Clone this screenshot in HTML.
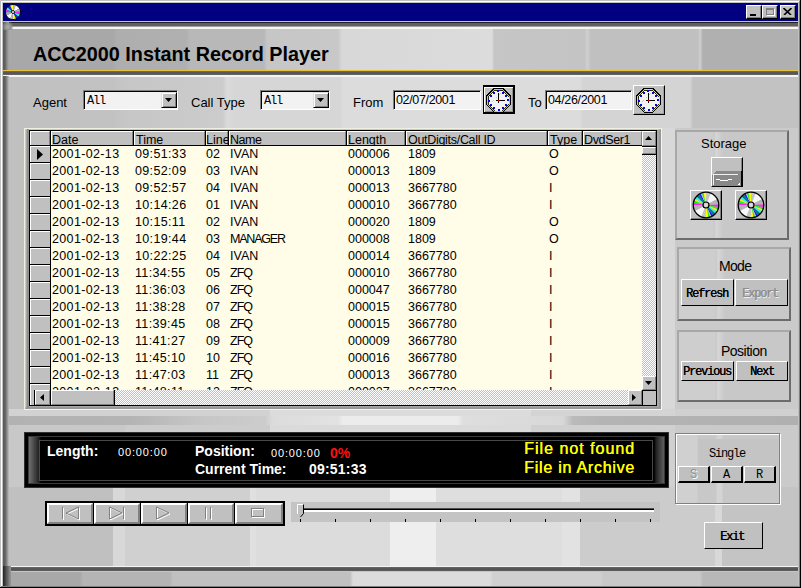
<!DOCTYPE html><html><head><meta charset="utf-8"><style>
*{box-sizing:border-box;margin:0;padding:0}
html,body{width:801px;height:588px;overflow:hidden;background:#c8c8c8}
body{position:relative;font-family:"Liberation Sans",sans-serif;color:#000}
.a{position:absolute}
.t{position:absolute;white-space:nowrap;line-height:1}
.mono{font-family:"Liberation Mono",monospace}
.btn{position:absolute;background:#c0c0c0;border-top:1px solid #fff;border-left:1px solid #fff;border-right:1px solid #000;border-bottom:1px solid #000;box-shadow:inset -1px -1px 0 #808080}
.btn2{position:absolute;background:#c0c0c0;border-top:1px solid #fff;border-left:1px solid #fff;border-right:1px solid #000;border-bottom:1px solid #000}
.sunk{position:absolute;background:#f2f2f2;border-top:1px solid #808080;border-left:1px solid #808080;border-right:1px solid #fff;border-bottom:1px solid #fff;box-shadow:inset 1px 1px 0 #000}
.dither{background-color:#c0c0c0;background-image:linear-gradient(45deg,#fff 25%,transparent 25%,transparent 75%,#fff 75%),linear-gradient(45deg,#fff 25%,transparent 25%,transparent 75%,#fff 75%);background-size:2px 2px;background-position:0 0,1px 1px}
.hdr{position:absolute;top:131px;height:14px;background:#c0c0c0;border-top:1px solid #fff;border-left:1px solid #fff;border-right:1px solid #808080}
.hdrt{position:absolute;top:133px;font-size:12.5px;white-space:nowrap;line-height:13px}
.cell{position:absolute;font-size:12.5px;white-space:nowrap;line-height:13px}
.num{letter-spacing:0}
.ind{position:absolute;left:30px;width:20px;height:16px;background:#c0c0c0;border-top:1px solid #fff;border-left:1px solid #fff}
.panel{position:absolute;border-top:2px solid #a8a8a8;border-left:2px solid #a8a8a8;border-right:2px solid #6c6c6c;border-bottom:2px solid #6c6c6c;background:linear-gradient(90deg,#cecece 0,#cecece 36px,#c8c8c8 37px,#d6d6d6 39px,#cccccc 44px,#c8c8c8 46px,#c8c8c8 200px)}
.wt{color:#fff;font-weight:bold}
</style></head><body>
<div class="a" style="left:0;top:0;width:801px;height:588px;background:#c0c0c0"></div>
<div class="a" style="left:1px;top:1px;width:799px;height:1px;background:#fff"></div>
<div class="a" style="left:1px;top:1px;width:1px;height:585px;background:#fff"></div>
<div class="a" style="left:800px;top:0;width:1px;height:588px;background:#000"></div>
<div class="a" style="left:0;top:587px;width:801px;height:1px;background:#000"></div>
<div class="a" style="left:799px;top:1px;width:1px;height:586px;background:#808080"></div>
<div class="a" style="left:1px;top:586px;width:799px;height:1px;background:#808080"></div>
<div class="a" style="left:3px;top:3px;width:795px;height:18px;background:#000080"></div>
<svg class="a" style="left:4px;top:3px" width="18" height="18" viewBox="0 0 18 18"><path d="M9 9 L1.40 9.27 A7.6 7.6 0 0 1 1.86 6.40 Z" fill="#ff20ff"/><path d="M9 9 L1.86 6.40 A7.6 7.6 0 0 1 3.35 3.91 Z" fill="#30f0f0"/><path d="M9 9 L3.35 3.91 A7.6 7.6 0 0 1 5.91 2.06 Z" fill="#2020ff"/><path d="M9 9 L5.91 2.06 A7.6 7.6 0 0 1 9.27 1.40 Z" fill="#ffff00"/><path d="M9 9 L9.27 1.40 A7.6 7.6 0 0 1 11.85 1.95 Z" fill="#c4c4c4"/><path d="M9 9 L11.85 1.95 A7.6 7.6 0 0 1 15.71 5.43 Z" fill="#f8f8f8"/><path d="M9 9 L15.71 5.43 A7.6 7.6 0 0 1 16.60 8.73 Z" fill="#b4b4b4"/><path d="M9 9 L16.60 8.73 A7.6 7.6 0 0 1 16.14 11.60 Z" fill="#ff20ff"/><path d="M9 9 L16.14 11.60 A7.6 7.6 0 0 1 14.65 14.09 Z" fill="#30f0f0"/><path d="M9 9 L14.65 14.09 A7.6 7.6 0 0 1 12.09 15.94 Z" fill="#2020ff"/><path d="M9 9 L12.09 15.94 A7.6 7.6 0 0 1 8.73 16.60 Z" fill="#ffff00"/><path d="M9 9 L8.73 16.60 A7.6 7.6 0 0 1 6.15 16.05 Z" fill="#c4c4c4"/><path d="M9 9 L6.15 16.05 A7.6 7.6 0 0 1 2.29 12.57 Z" fill="#f8f8f8"/><path d="M9 9 L2.29 12.57 A7.6 7.6 0 0 1 1.40 9.27 Z" fill="#b4b4b4"/><circle cx="9" cy="9" r="7.6" fill="none" stroke="#000" stroke-width="0.9"/><circle cx="9" cy="9" r="1.5" fill="#fff" stroke="#000" stroke-width="0.9"/></svg>
<div class="a" style="left:746px;top:5px;width:16px;height:14px;background:#c0c0c0;border-top:1px solid #fff;border-left:1px solid #fff;border-right:1px solid #000;border-bottom:1px solid #000;box-shadow:inset -1px -1px 0 #808080"></div>
<div class="a" style="left:762px;top:5px;width:16px;height:14px;background:#c0c0c0;border-top:1px solid #fff;border-left:1px solid #fff;border-right:1px solid #000;border-bottom:1px solid #000;box-shadow:inset -1px -1px 0 #808080"></div>
<div class="a" style="left:780px;top:5px;width:16px;height:14px;background:#c0c0c0;border-top:1px solid #fff;border-left:1px solid #fff;border-right:1px solid #000;border-bottom:1px solid #000;box-shadow:inset -1px -1px 0 #808080"></div>
<div class="a" style="left:750px;top:14px;width:6px;height:2px;background:#000"></div>
<div class="a" style="left:766px;top:8px;width:8px;height:7px;border:1px solid #808080;border-top-width:2px;box-shadow:1px 1px 0 #fff"></div>
<svg class="a" style="left:783px;top:8px" width="9" height="7" viewBox="0 0 9 7"><path d="M0.5 0 L8 7 M8.5 0 L1 7" stroke="#000" stroke-width="1.6"/></svg>
<div class="a" style="left:3px;top:21px;width:795px;height:565px;background:#c8c8c8"></div>
<div class="a" style="left:3px;top:21px;width:795px;height:1px;background:#c8c8c8"></div>
<div class="a" style="left:3px;top:22px;width:795px;height:1px;background:#202020"></div>
<div class="a" style="left:3px;top:23px;width:795px;height:3px;background:#606060"></div>
<div class="a" style="left:3px;top:26px;width:795px;height:1px;background:#a0a0a0"></div>
<div class="a" style="left:3px;top:27px;width:795px;height:2px;background:#f6f6f6"></div>
<div class="a" style="left:3px;top:29px;width:795px;height:41px;background:linear-gradient(90deg,#a8a8a8 0,#a8a8a8 110px,#aeaeae 114px,#b0b0b0 183px,#b8b8b8 187px,#b8b8b8 261px,#c6c6c6 264px,#c8c8c8 335px,#d8d8d8 339px,#dcdcdc 489px,#c6c6c6 491px,#c4c4c4 582px,#d0d0d0 584px,#c0c0c0 588px,#c0c0c0 695px,#d0d0d0 697px,#b0b0b0 700px,#b0b0b0 795px)"></div>
<div class="a" style="left:3px;top:22px;width:6px;height:54px;background:linear-gradient(90deg,#5a5a5a 0,#606060 2px,#8c8c8c 4px,#a8a8a8 6px)"></div>
<div class="a" style="left:3px;top:22px;width:10px;height:8px;background:radial-gradient(circle at 5px 5px,#b0b0b0 0,#909090 3px,rgba(144,144,144,0) 6px)"></div>
<div class="a" style="left:3px;top:70px;width:795px;height:1px;background:#e8c040"></div>
<div class="a" style="left:3px;top:71px;width:795px;height:4px;background:linear-gradient(#707070,#505050 50%,#6a6a6a)"></div>
<div class="a" style="left:3px;top:75px;width:795px;height:2px;background:#f4f4f4"></div>
<div class="t" style="left:33px;top:45px;font-size:19.8px;font-weight:bold;color:#000">ACC2000 Instant Record Player</div>
<div class="a" style="left:3px;top:77px;width:795px;height:51px;background:linear-gradient(90deg,#c0c0c0 0px,#c2c2c2 110px,#c6c6c6 122px,#cccccc 220px,#dadada 224px,#d6d6d6 232px,#d6d6d6 337px,#dcdcdc 340px,#dcdcdc 577px,#d4d4d4 580px,#d4d4d4 687px,#c2c2c2 690px,#c2c2c2 795px)"></div>
<div class="a" style="left:3px;top:128px;width:795px;height:282px;background:linear-gradient(90deg,#c0c0c0 0px,#c0c0c0 21px,#c8c8c8 21px,#c8c8c8 658px,#d8d8d8 658px,#d8d8d8 672px,#cacaca 672px,#cacaca 798px)"></div>
<div class="a" style="left:3px;top:409px;width:795px;height:7px;background:linear-gradient(90deg,#d2d2d2 0px,#d2d2d2 267px,#dcdcdc 267px,#dcdcdc 528px,#d4d4d4 528px,#d4d4d4 672px,#d0d0d0 672px,#d0d0d0 798px)"></div>
<div class="a" style="left:3px;top:416px;width:795px;height:9px;background:linear-gradient(90deg,#b2b2b2 0px,#b4b4b4 127px,#c6c6c6 197px,#cccccc 262px,#dcdcdc 270px,#e2e2e2 335px,#ececec 340px,#ececec 455px,#dedede 460px,#d8d8d8 560px,#bababa 570px,#b4b4b4 600px,#b0b0b0 795px)"></div>
<div class="a" style="left:3px;top:425px;width:795px;height:62px;background:linear-gradient(90deg,#c8c8c8 0px,#c8c8c8 110px,#c8c8c8 110px,#c8c8c8 122px,#cccccc 122px,#cccccc 267px,#dadada 267px,#dadada 528px,#d0d0d0 528px,#d0d0d0 672px,#cacaca 672px,#cacaca 798px)"></div>
<div class="a" style="left:3px;top:487px;width:795px;height:79px;background:linear-gradient(90deg,#c0c0c0 0px,#c0c0c0 110px,#d8d8d8 110px,#d8d8d8 122px,#d0d0d0 122px,#d0d0d0 247px,#e0e0e0 247px,#e0e0e0 253px,#dcdcdc 253px,#dcdcdc 387px,#eeeeee 387px,#eeeeee 433px,#dedede 433px,#dedede 559px,#e2e2e2 559px,#e2e2e2 577px,#cccccc 577px,#cccccc 712px,#d8d8d8 712px,#d8d8d8 719px,#c4c4c4 719px,#c4c4c4 798px)"></div>
<div class="a" style="left:3px;top:76px;width:6px;height:490px;background:linear-gradient(90deg,#5a5a5a 0,#606060 2px,#8c8c8c 4px,#c0c0c0 6px)"></div>
<div class="a" style="left:3px;top:566px;width:795px;height:1px;background:#f4f4f4"></div>
<div class="a" style="left:3px;top:567px;width:795px;height:4px;background:linear-gradient(#6a6a6a,#505050 50%,#606060)"></div>
<div class="a" style="left:3px;top:571px;width:795px;height:1px;background:#f0c848"></div>
<div class="a" style="left:3px;top:572px;width:795px;height:14px;background:linear-gradient(90deg,#a8a8a8 0,#a8a8a8 77px,#b4b4b4 80px,#b4b4b4 167px,#c0c0c0 170px,#c0c0c0 347px,#dcdcdc 350px,#dcdcdc 487px,#d0d0d0 490px,#d0d0d0 597px,#c8c8c8 600px,#c8c8c8 697px,#b8b8b8 700px,#b8b8b8 795px)"></div>
<div class="a" style="left:3px;top:566px;width:8px;height:20px;background:linear-gradient(90deg,#202020,#9a9a9a)"></div>
<div class="t" style="left:33px;top:96px;font-size:13px">Agent</div>
<div class="t" style="left:191px;top:96px;font-size:13px">Call Type</div>
<div class="t" style="left:353px;top:96px;font-size:13px">From</div>
<div class="t" style="left:528px;top:96px;font-size:13px">To</div>
<div class="sunk" style="left:83px;top:90px;width:95px;height:20px"></div>
<div class="t mono" style="left:87px;top:95px;font-size:12px;letter-spacing:-1.2px">All</div>
<div class="a" style="left:161px;top:92px;width:16px;height:16px;background:#c0c0c0;border-top:1px solid #dfdfdf;border-left:1px solid #dfdfdf;border-right:1px solid #000;border-bottom:1px solid #000;box-shadow:inset 1px 1px 0 #fff, inset -1px -1px 0 #808080"></div>
<svg class="a" style="left:165px;top:98px" width="7" height="4" viewBox="0 0 7 4"><path d="M0 0H7L3.5 4Z" fill="#000"/></svg>
<div class="sunk" style="left:260px;top:90px;width:70px;height:20px"></div>
<div class="t mono" style="left:264px;top:95px;font-size:12px;letter-spacing:-1.2px">All</div>
<div class="a" style="left:313px;top:92px;width:16px;height:16px;background:#c0c0c0;border-top:1px solid #dfdfdf;border-left:1px solid #dfdfdf;border-right:1px solid #000;border-bottom:1px solid #000;box-shadow:inset 1px 1px 0 #fff, inset -1px -1px 0 #808080"></div>
<svg class="a" style="left:317px;top:98px" width="7" height="4" viewBox="0 0 7 4"><path d="M0 0H7L3.5 4Z" fill="#000"/></svg>
<div class="sunk" style="left:393px;top:90px;width:88px;height:20px"></div>
<div class="t" style="left:396px;top:94px;font-size:12.5px;letter-spacing:-0.35px">02/07/2001</div>
<div class="sunk" style="left:545px;top:90px;width:87px;height:20px"></div>
<div class="t" style="left:548px;top:94px;font-size:12.5px;letter-spacing:-0.35px">04/26/2001</div>
<div class="a" style="left:483px;top:85px;width:32px;height:29px;background:#c0c0c0;border-top:2px solid #000;border-left:1px solid #000;border-right:2px solid #000;border-bottom:2px solid #000;box-shadow:inset 1px 1px 0 #fff, inset -1px -1px 0 #909090"></div>
<svg class="a" style="left:483px;top:85px" width="32" height="30" viewBox="0 0 32 30" shape-rendering="crispEdges">
<polygon points="11.1,2.9 19.9,2.9 28.1,11.1 28.1,19.9 19.9,28.1 11.1,28.1 2.9,19.9 2.9,11.1" fill="#000"/>
<polygon points="11.5,3.8 19.5,3.8 27.2,11.5 27.2,19.5 19.5,27.2 11.5,27.2 3.8,19.5 3.8,11.5" fill="#d8d800"/>
<polygon points="11.8,4.7 19.2,4.7 26.3,11.8 26.3,19.2 19.2,26.3 11.8,26.3 4.7,19.2 4.7,11.8" fill="#303000"/>
<polygon points="12.1,5.5 18.9,5.5 25.5,12.1 25.5,18.9 18.9,25.5 12.1,25.5 5.5,18.9 5.5,12.1" fill="#f2f2f2"/>
<path d="M7.5 18.5 L18.5 7.5" stroke="#c8c8c8" stroke-width="1" stroke-dasharray="1 1"/>
<rect x="14" y="5" width="2" height="2" fill="#0000ff"/><rect x="19" y="7" width="2" height="2" fill="#0000ff"/><rect x="22" y="10" width="2" height="2" fill="#0000ff"/><rect x="24" y="14" width="2" height="2" fill="#0000ff"/><rect x="22" y="19" width="2" height="2" fill="#0000ff"/><rect x="19" y="22" width="2" height="2" fill="#0000ff"/><rect x="15" y="24" width="2" height="2" fill="#0000ff"/><rect x="10" y="22" width="2" height="2" fill="#0000ff"/><rect x="7" y="19" width="2" height="2" fill="#0000ff"/><rect x="5" y="15" width="2" height="2" fill="#0000ff"/><rect x="7" y="10" width="2" height="2" fill="#0000ff"/><rect x="10" y="7" width="2" height="2" fill="#0000ff"/>
<rect x="15" y="8" width="1" height="10" fill="#000"/>
<rect x="13" y="15" width="9" height="1" fill="#000"/>
<rect x="15" y="15" width="1" height="1" fill="#ff0000"/>
</svg>
<div class="a" style="left:633px;top:85px;width:32px;height:30px;background:#c0c0c0;border-top:1px solid #fff;border-left:1px solid #fff;border-right:1px solid #000;border-bottom:1px solid #000;box-shadow:inset -1px -1px 0 #a0a0a0"></div>
<svg class="a" style="left:633px;top:85px" width="32" height="30" viewBox="0 0 32 30" shape-rendering="crispEdges">
<polygon points="11.1,2.9 19.9,2.9 28.1,11.1 28.1,19.9 19.9,28.1 11.1,28.1 2.9,19.9 2.9,11.1" fill="#000"/>
<polygon points="11.5,3.8 19.5,3.8 27.2,11.5 27.2,19.5 19.5,27.2 11.5,27.2 3.8,19.5 3.8,11.5" fill="#e8e800"/>
<polygon points="11.8,4.7 19.2,4.7 26.3,11.8 26.3,19.2 19.2,26.3 11.8,26.3 4.7,19.2 4.7,11.8" fill="#303000"/>
<polygon points="12.1,5.5 18.9,5.5 25.5,12.1 25.5,18.9 18.9,25.5 12.1,25.5 5.5,18.9 5.5,12.1" fill="#f2f2f2"/>
<path d="M7.5 18.5 L18.5 7.5" stroke="#c8c8c8" stroke-width="1" stroke-dasharray="1 1"/>
<rect x="14" y="5" width="2" height="2" fill="#0000ff"/><rect x="19" y="7" width="2" height="2" fill="#0000ff"/><rect x="22" y="10" width="2" height="2" fill="#0000ff"/><rect x="24" y="14" width="2" height="2" fill="#0000ff"/><rect x="22" y="19" width="2" height="2" fill="#0000ff"/><rect x="19" y="22" width="2" height="2" fill="#0000ff"/><rect x="15" y="24" width="2" height="2" fill="#0000ff"/><rect x="10" y="22" width="2" height="2" fill="#0000ff"/><rect x="7" y="19" width="2" height="2" fill="#0000ff"/><rect x="5" y="15" width="2" height="2" fill="#0000ff"/><rect x="7" y="10" width="2" height="2" fill="#0000ff"/><rect x="10" y="7" width="2" height="2" fill="#0000ff"/>
<rect x="15" y="8" width="1" height="10" fill="#000"/>
<rect x="13" y="15" width="9" height="1" fill="#000"/>
<rect x="15" y="15" width="1" height="1" fill="#ff0000"/>
</svg>
<div class="a" style="left:24px;top:128px;width:638px;height:282px;border-top:1px solid #f0f0e0;border-left:1px solid #f0f0e0;border-right:1px solid #f4f4f4;border-bottom:1px solid #f4f4f4"></div>
<div class="a" style="left:25px;top:129px;width:636px;height:280px;background:#a8a8a8;border-top:1px solid #c8c8c8;border-left:1px solid #c8c8c8;border-right:2px solid #989898;border-bottom:2px solid #989898"></div>
<div class="a" style="left:27px;top:129px;width:2px;height:279px;background:#909090"></div>
<div class="a" style="left:29px;top:130px;width:628px;height:276px;background:#fffde8;border:1px solid #000"></div>
<div class="a" style="left:30px;top:131px;width:612px;height:14px;background:#c0c0c0"></div>
<div class="a" style="left:30px;top:145px;width:612px;height:1px;background:#000"></div>
<div class="hdr" style="left:30px;width:20px"></div>
<div class="hdr" style="left:51px;width:82px"></div>
<div class="hdr" style="left:134px;width:71px"></div>
<div class="hdr" style="left:206px;width:22px"></div>
<div class="hdr" style="left:229px;width:117px"></div>
<div class="hdr" style="left:347px;width:58px"></div>
<div class="hdr" style="left:406px;width:141px"></div>
<div class="hdr" style="left:548px;width:34px"></div>
<div class="hdr" style="left:583px;width:59px"></div>
<div class="a" style="left:50px;top:131px;width:1px;height:14px;background:#000"></div>
<div class="a" style="left:133px;top:131px;width:1px;height:14px;background:#000"></div>
<div class="a" style="left:205px;top:131px;width:1px;height:14px;background:#000"></div>
<div class="a" style="left:228px;top:131px;width:1px;height:14px;background:#000"></div>
<div class="a" style="left:346px;top:131px;width:1px;height:14px;background:#000"></div>
<div class="a" style="left:405px;top:131px;width:1px;height:14px;background:#000"></div>
<div class="a" style="left:547px;top:131px;width:1px;height:14px;background:#000"></div>
<div class="a" style="left:582px;top:131px;width:1px;height:14px;background:#000"></div>
<div class="a" style="left:51px;top:131px;width:82px;height:14px;overflow:hidden"><div class="hdrt" style="left:1px;top:3px;letter-spacing:0px">Date</div></div>
<div class="a" style="left:135px;top:131px;width:70px;height:14px;overflow:hidden"><div class="hdrt" style="left:1px;top:3px;letter-spacing:0px">Time</div></div>
<div class="a" style="left:205px;top:131px;width:23px;height:14px;overflow:hidden"><div class="hdrt" style="left:1px;top:3px;letter-spacing:0px">Line</div></div>
<div class="a" style="left:229px;top:131px;width:117px;height:14px;overflow:hidden"><div class="hdrt" style="left:1px;top:3px;letter-spacing:-0.5px">Name</div></div>
<div class="a" style="left:347px;top:131px;width:58px;height:14px;overflow:hidden"><div class="hdrt" style="left:1px;top:3px;letter-spacing:0px">Length</div></div>
<div class="a" style="left:407px;top:131px;width:140px;height:14px;overflow:hidden"><div class="hdrt" style="left:1px;top:3px;letter-spacing:-0.3px">OutDigits/Call ID</div></div>
<div class="a" style="left:549px;top:131px;width:33px;height:14px;overflow:hidden"><div class="hdrt" style="left:1px;top:3px;letter-spacing:0px">Type</div></div>
<div class="a" style="left:583px;top:131px;width:59px;height:14px;overflow:hidden"><div class="hdrt" style="left:1px;top:3px;letter-spacing:-0.35px">DvdSer1</div></div>
<div class="a" style="left:30px;top:146px;width:20px;height:244px;background:#c0c0c0"></div>
<div class="a" style="left:50px;top:146px;width:1px;height:244px;background:#000"></div>
<div class="ind" style="top:146px"></div>
<div class="a" style="left:30px;top:162px;width:20px;height:1px;background:#000"></div>
<div class="ind" style="top:163px"></div>
<div class="a" style="left:30px;top:179px;width:20px;height:1px;background:#000"></div>
<div class="ind" style="top:180px"></div>
<div class="a" style="left:30px;top:196px;width:20px;height:1px;background:#000"></div>
<div class="ind" style="top:197px"></div>
<div class="a" style="left:30px;top:213px;width:20px;height:1px;background:#000"></div>
<div class="ind" style="top:214px"></div>
<div class="a" style="left:30px;top:230px;width:20px;height:1px;background:#000"></div>
<div class="ind" style="top:231px"></div>
<div class="a" style="left:30px;top:247px;width:20px;height:1px;background:#000"></div>
<div class="ind" style="top:248px"></div>
<div class="a" style="left:30px;top:264px;width:20px;height:1px;background:#000"></div>
<div class="ind" style="top:265px"></div>
<div class="a" style="left:30px;top:281px;width:20px;height:1px;background:#000"></div>
<div class="ind" style="top:282px"></div>
<div class="a" style="left:30px;top:298px;width:20px;height:1px;background:#000"></div>
<div class="ind" style="top:299px"></div>
<div class="a" style="left:30px;top:315px;width:20px;height:1px;background:#000"></div>
<div class="ind" style="top:316px"></div>
<div class="a" style="left:30px;top:332px;width:20px;height:1px;background:#000"></div>
<div class="ind" style="top:333px"></div>
<div class="a" style="left:30px;top:349px;width:20px;height:1px;background:#000"></div>
<div class="ind" style="top:350px"></div>
<div class="a" style="left:30px;top:366px;width:20px;height:1px;background:#000"></div>
<div class="ind" style="top:367px"></div>
<div class="a" style="left:30px;top:383px;width:20px;height:1px;background:#000"></div>
<div class="ind" style="top:384px"></div>
<div class="a" style="left:30px;top:400px;width:20px;height:1px;background:#000"></div>
<svg class="a" style="left:37px;top:149px" width="6" height="11" viewBox="0 0 6 11"><path d="M0 0L6 5.5L0 11Z" fill="#000"/></svg>
<div class="a" style="left:51px;top:146px;width:591px;height:244px;overflow:hidden">
<div class="cell" style="left:1px;top:2px;letter-spacing:0.35px">2001-02-13</div>
<div class="cell" style="left:84px;top:2px;letter-spacing:0.35px">09:51:33</div>
<div class="cell" style="left:155px;top:2px;letter-spacing:0px">02</div>
<div class="cell" style="left:179px;top:2px;letter-spacing:0px">IVAN</div>
<div class="cell" style="left:297px;top:2px;letter-spacing:0px">000006</div>
<div class="cell" style="left:357px;top:2px;letter-spacing:0px">1809</div>
<div class="cell" style="left:498px;top:2px;letter-spacing:0px">O</div>
<div class="cell" style="left:1px;top:19px;letter-spacing:0.35px">2001-02-13</div>
<div class="cell" style="left:84px;top:19px;letter-spacing:0.35px">09:52:09</div>
<div class="cell" style="left:155px;top:19px;letter-spacing:0px">03</div>
<div class="cell" style="left:179px;top:19px;letter-spacing:0px">IVAN</div>
<div class="cell" style="left:297px;top:19px;letter-spacing:0px">000013</div>
<div class="cell" style="left:357px;top:19px;letter-spacing:0px">1809</div>
<div class="cell" style="left:498px;top:19px;letter-spacing:0px">O</div>
<div class="cell" style="left:1px;top:36px;letter-spacing:0.35px">2001-02-13</div>
<div class="cell" style="left:84px;top:36px;letter-spacing:0.35px">09:52:57</div>
<div class="cell" style="left:155px;top:36px;letter-spacing:0px">04</div>
<div class="cell" style="left:179px;top:36px;letter-spacing:0px">IVAN</div>
<div class="cell" style="left:297px;top:36px;letter-spacing:0px">000013</div>
<div class="cell" style="left:357px;top:36px;letter-spacing:0px">3667780</div>
<div class="cell" style="left:498px;top:36px;letter-spacing:0px">I</div>
<div class="cell" style="left:1px;top:53px;letter-spacing:0.35px">2001-02-13</div>
<div class="cell" style="left:84px;top:53px;letter-spacing:0.35px">10:14:26</div>
<div class="cell" style="left:155px;top:53px;letter-spacing:0px">01</div>
<div class="cell" style="left:179px;top:53px;letter-spacing:0px">IVAN</div>
<div class="cell" style="left:297px;top:53px;letter-spacing:0px">000010</div>
<div class="cell" style="left:357px;top:53px;letter-spacing:0px">3667780</div>
<div class="cell" style="left:498px;top:53px;letter-spacing:0px">I</div>
<div class="cell" style="left:1px;top:70px;letter-spacing:0.35px">2001-02-13</div>
<div class="cell" style="left:84px;top:70px;letter-spacing:0.35px">10:15:11</div>
<div class="cell" style="left:155px;top:70px;letter-spacing:0px">02</div>
<div class="cell" style="left:179px;top:70px;letter-spacing:0px">IVAN</div>
<div class="cell" style="left:297px;top:70px;letter-spacing:0px">000020</div>
<div class="cell" style="left:357px;top:70px;letter-spacing:0px">1809</div>
<div class="cell" style="left:498px;top:70px;letter-spacing:0px">O</div>
<div class="cell" style="left:1px;top:87px;letter-spacing:0.35px">2001-02-13</div>
<div class="cell" style="left:84px;top:87px;letter-spacing:0.35px">10:19:44</div>
<div class="cell" style="left:155px;top:87px;letter-spacing:0px">03</div>
<div class="cell" style="left:179px;top:87px;letter-spacing:-1.2px">MANAGER</div>
<div class="cell" style="left:297px;top:87px;letter-spacing:0px">000008</div>
<div class="cell" style="left:357px;top:87px;letter-spacing:0px">1809</div>
<div class="cell" style="left:498px;top:87px;letter-spacing:0px">O</div>
<div class="cell" style="left:1px;top:104px;letter-spacing:0.35px">2001-02-13</div>
<div class="cell" style="left:84px;top:104px;letter-spacing:0.35px">10:22:25</div>
<div class="cell" style="left:155px;top:104px;letter-spacing:0px">04</div>
<div class="cell" style="left:179px;top:104px;letter-spacing:0px">IVAN</div>
<div class="cell" style="left:297px;top:104px;letter-spacing:0px">000014</div>
<div class="cell" style="left:357px;top:104px;letter-spacing:0px">3667780</div>
<div class="cell" style="left:498px;top:104px;letter-spacing:0px">I</div>
<div class="cell" style="left:1px;top:121px;letter-spacing:0.35px">2001-02-13</div>
<div class="cell" style="left:84px;top:121px;letter-spacing:0.35px">11:34:55</div>
<div class="cell" style="left:155px;top:121px;letter-spacing:0px">05</div>
<div class="cell" style="left:179px;top:121px;letter-spacing:-1.0px">ZFQ</div>
<div class="cell" style="left:297px;top:121px;letter-spacing:0px">000010</div>
<div class="cell" style="left:357px;top:121px;letter-spacing:0px">3667780</div>
<div class="cell" style="left:498px;top:121px;letter-spacing:0px">I</div>
<div class="cell" style="left:1px;top:138px;letter-spacing:0.35px">2001-02-13</div>
<div class="cell" style="left:84px;top:138px;letter-spacing:0.35px">11:36:03</div>
<div class="cell" style="left:155px;top:138px;letter-spacing:0px">06</div>
<div class="cell" style="left:179px;top:138px;letter-spacing:-1.0px">ZFQ</div>
<div class="cell" style="left:297px;top:138px;letter-spacing:0px">000047</div>
<div class="cell" style="left:357px;top:138px;letter-spacing:0px">3667780</div>
<div class="cell" style="left:498px;top:138px;letter-spacing:0px">I</div>
<div class="cell" style="left:1px;top:155px;letter-spacing:0.35px">2001-02-13</div>
<div class="cell" style="left:84px;top:155px;letter-spacing:0.35px">11:38:28</div>
<div class="cell" style="left:155px;top:155px;letter-spacing:0px">07</div>
<div class="cell" style="left:179px;top:155px;letter-spacing:-1.0px">ZFQ</div>
<div class="cell" style="left:297px;top:155px;letter-spacing:0px">000015</div>
<div class="cell" style="left:357px;top:155px;letter-spacing:0px">3667780</div>
<div class="cell" style="left:498px;top:155px;letter-spacing:0px">I</div>
<div class="cell" style="left:1px;top:172px;letter-spacing:0.35px">2001-02-13</div>
<div class="cell" style="left:84px;top:172px;letter-spacing:0.35px">11:39:45</div>
<div class="cell" style="left:155px;top:172px;letter-spacing:0px">08</div>
<div class="cell" style="left:179px;top:172px;letter-spacing:-1.0px">ZFQ</div>
<div class="cell" style="left:297px;top:172px;letter-spacing:0px">000015</div>
<div class="cell" style="left:357px;top:172px;letter-spacing:0px">3667780</div>
<div class="cell" style="left:498px;top:172px;letter-spacing:0px">I</div>
<div class="cell" style="left:1px;top:189px;letter-spacing:0.35px">2001-02-13</div>
<div class="cell" style="left:84px;top:189px;letter-spacing:0.35px">11:41:27</div>
<div class="cell" style="left:155px;top:189px;letter-spacing:0px">09</div>
<div class="cell" style="left:179px;top:189px;letter-spacing:-1.0px">ZFQ</div>
<div class="cell" style="left:297px;top:189px;letter-spacing:0px">000009</div>
<div class="cell" style="left:357px;top:189px;letter-spacing:0px">3667780</div>
<div class="cell" style="left:498px;top:189px;letter-spacing:0px">I</div>
<div class="cell" style="left:1px;top:206px;letter-spacing:0.35px">2001-02-13</div>
<div class="cell" style="left:84px;top:206px;letter-spacing:0.35px">11:45:10</div>
<div class="cell" style="left:155px;top:206px;letter-spacing:0px">10</div>
<div class="cell" style="left:179px;top:206px;letter-spacing:-1.0px">ZFQ</div>
<div class="cell" style="left:297px;top:206px;letter-spacing:0px">000016</div>
<div class="cell" style="left:357px;top:206px;letter-spacing:0px">3667780</div>
<div class="cell" style="left:498px;top:206px;letter-spacing:0px">I</div>
<div class="cell" style="left:1px;top:223px;letter-spacing:0.35px">2001-02-13</div>
<div class="cell" style="left:84px;top:223px;letter-spacing:0.35px">11:47:03</div>
<div class="cell" style="left:155px;top:223px;letter-spacing:0px">11</div>
<div class="cell" style="left:179px;top:223px;letter-spacing:-1.0px">ZFQ</div>
<div class="cell" style="left:297px;top:223px;letter-spacing:0px">000013</div>
<div class="cell" style="left:357px;top:223px;letter-spacing:0px">3667780</div>
<div class="cell" style="left:498px;top:223px;letter-spacing:0px">I</div>
<div class="cell" style="left:1px;top:240px;letter-spacing:0.35px">2001-02-13</div>
<div class="cell" style="left:84px;top:240px;letter-spacing:0.35px">11:48:11</div>
<div class="cell" style="left:155px;top:240px;letter-spacing:0px">12</div>
<div class="cell" style="left:179px;top:240px;letter-spacing:-1.0px">ZFQ</div>
<div class="cell" style="left:297px;top:240px;letter-spacing:0px">000027</div>
<div class="cell" style="left:357px;top:240px;letter-spacing:0px">3667780</div>
<div class="cell" style="left:498px;top:240px;letter-spacing:0px">I</div>
</div>
<div class="a dither" style="left:642px;top:155px;width:14px;height:221px"></div>
<div style="position:absolute;background:#c0c0c0;border-top:1px solid #fff;border-left:1px solid #fff;border-right:1px solid #808080;border-bottom:1px solid #808080;left:642px;top:131px;width:14px;height:15px"></div>
<svg class="a" style="left:645px;top:136px" width="7" height="4" viewBox="0 0 7 4"><path d="M0 4H7L3.5 0Z" fill="#000"/></svg>
<div class="a" style="left:642px;top:146px;width:14px;height:1px;background:#000"></div>
<div style="position:absolute;background:#c0c0c0;border-top:1px solid #fff;border-left:1px solid #fff;border-right:1px solid #808080;border-bottom:1px solid #808080;left:642px;top:147px;width:14px;height:7px"></div>
<div class="a" style="left:642px;top:154px;width:14px;height:1px;background:#000"></div>
<div style="position:absolute;background:#c0c0c0;border-top:1px solid #fff;border-left:1px solid #fff;border-right:1px solid #808080;border-bottom:1px solid #808080;left:642px;top:376px;width:14px;height:14px"></div>
<svg class="a" style="left:645px;top:381px" width="7" height="4" viewBox="0 0 7 4"><path d="M0 0H7L3.5 4Z" fill="#000"/></svg>
<div class="a dither" style="left:115px;top:390px;width:513px;height:15px"></div>
<div class="a" style="left:30px;top:390px;width:4px;height:15px;background:#c0c0c0;border-left:1px solid #fff"></div>
<div class="a" style="left:34px;top:390px;width:1px;height:15px;background:#000"></div>
<div style="position:absolute;background:#c0c0c0;border-top:1px solid #fff;border-left:1px solid #fff;border-right:1px solid #808080;border-bottom:1px solid #808080;left:35px;top:390px;width:15px;height:15px"></div>
<svg class="a" style="left:40px;top:394px" width="4" height="7" viewBox="0 0 4 7"><path d="M4 0V7L0 3.5Z" fill="#000"/></svg>
<div class="a" style="left:50px;top:390px;width:1px;height:15px;background:#000"></div>
<div style="position:absolute;background:#c0c0c0;border-top:1px solid #fff;border-left:1px solid #fff;border-right:1px solid #808080;border-bottom:1px solid #808080;left:51px;top:390px;width:63px;height:15px"></div>
<div class="a" style="left:114px;top:390px;width:1px;height:15px;background:#000"></div>
<div style="position:absolute;background:#c0c0c0;border-top:1px solid #fff;border-left:1px solid #fff;border-right:1px solid #808080;border-bottom:1px solid #808080;left:628px;top:390px;width:14px;height:15px"></div>
<svg class="a" style="left:632px;top:394px" width="4" height="7" viewBox="0 0 4 7"><path d="M0 0V7L4 3.5Z" fill="#000"/></svg>
<div class="a" style="left:642px;top:390px;width:14px;height:15px;background:#c0c0c0;border-left:1px solid #000;border-top:1px solid #000"></div>
<div class="panel" style="left:675px;top:130px;width:114px;height:110px"></div>
<div class="t" style="left:701px;top:137px;font-size:13px">Storage</div>
<div class="btn2" style="left:711px;top:157px;width:32px;height:30px;box-shadow:inset -1px -1px 0 #808080"></div>
<svg class="a" style="left:711px;top:157px" width="32" height="30" viewBox="0 0 32 30" shape-rendering="crispEdges">
<path d="M1 18 L5 14 H31 V29 H1 Z" fill="#888888"/>
<path d="M2 17.5 H27" stroke="#f0f0f0" stroke-width="1"/>
<path d="M2.5 17 V28" stroke="#f0f0f0" stroke-width="1"/>
<path d="M1 29.5 H31 M30.5 14 V29" stroke="#000" stroke-width="1"/>
<path d="M5 22.5 H9 M9 23.5 H17 M17 22.5 H21" stroke="#fff" stroke-width="1"/>
<path d="M26 28 L29 28 L29 25 Z" fill="#fff"/>
</svg>
<div class="btn2" style="left:690px;top:190px;width:32px;height:30px;box-shadow:inset -1px -1px 0 #808080"></div>
<svg class="a" style="left:690px;top:190px" width="32" height="30" viewBox="0 0 32 30">
<circle cx="16" cy="15" r="12.8" fill="#b8b8b8"/><path d="M16 15 L3.21 15.45 A12.8 12.8 0 0 1 3.39 12.78 Z" fill="#ff20ff"/><path d="M16 15 L3.39 12.78 A12.8 12.8 0 0 1 3.97 10.62 Z" fill="#20f020"/><path d="M16 15 L3.97 10.62 A12.8 12.8 0 0 1 4.91 8.60 Z" fill="#f0f020"/><path d="M16 15 L4.91 8.60 A12.8 12.8 0 0 1 6.49 6.44 Z" fill="#30f0f0"/><path d="M16 15 L6.49 6.44 A12.8 12.8 0 0 1 8.84 4.39 Z" fill="#008080"/><path d="M16 15 L8.84 4.39 A12.8 12.8 0 0 1 10.79 3.31 Z" fill="#2020ff"/><path d="M16 15 L10.79 3.31 A12.8 12.8 0 0 1 11.83 2.90 Z" fill="#d0d0d0"/><path d="M16 15 L11.83 2.90 A12.8 12.8 0 0 1 13.56 2.44 Z" fill="#20f020"/><path d="M16 15 L13.56 2.44 A12.8 12.8 0 0 1 16.45 2.21 Z" fill="#ffff00"/><path d="M16 15 L16.45 2.21 A12.8 12.8 0 0 1 20.79 3.13 Z" fill="#c4c4c4"/><path d="M16 15 L20.79 3.13 A12.8 12.8 0 0 1 27.30 8.99 Z" fill="#f8f8f8"/><path d="M16 15 L27.30 8.99 A12.8 12.8 0 0 1 28.79 14.55 Z" fill="#b4b4b4"/><path d="M16 15 L28.79 14.55 A12.8 12.8 0 0 1 28.61 17.22 Z" fill="#ff20ff"/><path d="M16 15 L28.61 17.22 A12.8 12.8 0 0 1 28.03 19.38 Z" fill="#20f020"/><path d="M16 15 L28.03 19.38 A12.8 12.8 0 0 1 27.09 21.40 Z" fill="#f0f020"/><path d="M16 15 L27.09 21.40 A12.8 12.8 0 0 1 25.51 23.56 Z" fill="#30f0f0"/><path d="M16 15 L25.51 23.56 A12.8 12.8 0 0 1 23.16 25.61 Z" fill="#008080"/><path d="M16 15 L23.16 25.61 A12.8 12.8 0 0 1 21.21 26.69 Z" fill="#2020ff"/><path d="M16 15 L21.21 26.69 A12.8 12.8 0 0 1 20.17 27.10 Z" fill="#d0d0d0"/><path d="M16 15 L20.17 27.10 A12.8 12.8 0 0 1 18.44 27.56 Z" fill="#20f020"/><path d="M16 15 L18.44 27.56 A12.8 12.8 0 0 1 15.55 27.79 Z" fill="#ffff00"/><path d="M16 15 L15.55 27.79 A12.8 12.8 0 0 1 11.21 26.87 Z" fill="#c4c4c4"/><path d="M16 15 L11.21 26.87 A12.8 12.8 0 0 1 4.70 21.01 Z" fill="#f8f8f8"/><path d="M16 15 L4.70 21.01 A12.8 12.8 0 0 1 3.21 15.45 Z" fill="#b4b4b4"/>
<circle cx="16" cy="15" r="12.8" fill="none" stroke="#000" stroke-width="1.3"/>
<circle cx="16" cy="15" r="3" fill="#c0c0c0" stroke="#000" stroke-width="1.2"/>
<rect x="14.5" y="13.5" width="3" height="3" fill="#e0e0e0"/>
</svg>
<div class="btn2" style="left:735px;top:190px;width:32px;height:30px;box-shadow:inset -1px -1px 0 #808080"></div>
<svg class="a" style="left:735px;top:190px" width="32" height="30" viewBox="0 0 32 30">
<circle cx="16" cy="15" r="12.8" fill="#b8b8b8"/><path d="M16 15 L3.21 15.45 A12.8 12.8 0 0 1 3.39 12.78 Z" fill="#ff20ff"/><path d="M16 15 L3.39 12.78 A12.8 12.8 0 0 1 3.97 10.62 Z" fill="#20f020"/><path d="M16 15 L3.97 10.62 A12.8 12.8 0 0 1 4.91 8.60 Z" fill="#f0f020"/><path d="M16 15 L4.91 8.60 A12.8 12.8 0 0 1 6.49 6.44 Z" fill="#30f0f0"/><path d="M16 15 L6.49 6.44 A12.8 12.8 0 0 1 8.84 4.39 Z" fill="#008080"/><path d="M16 15 L8.84 4.39 A12.8 12.8 0 0 1 10.79 3.31 Z" fill="#2020ff"/><path d="M16 15 L10.79 3.31 A12.8 12.8 0 0 1 11.83 2.90 Z" fill="#d0d0d0"/><path d="M16 15 L11.83 2.90 A12.8 12.8 0 0 1 13.56 2.44 Z" fill="#20f020"/><path d="M16 15 L13.56 2.44 A12.8 12.8 0 0 1 16.45 2.21 Z" fill="#ffff00"/><path d="M16 15 L16.45 2.21 A12.8 12.8 0 0 1 20.79 3.13 Z" fill="#c4c4c4"/><path d="M16 15 L20.79 3.13 A12.8 12.8 0 0 1 27.30 8.99 Z" fill="#f8f8f8"/><path d="M16 15 L27.30 8.99 A12.8 12.8 0 0 1 28.79 14.55 Z" fill="#b4b4b4"/><path d="M16 15 L28.79 14.55 A12.8 12.8 0 0 1 28.61 17.22 Z" fill="#ff20ff"/><path d="M16 15 L28.61 17.22 A12.8 12.8 0 0 1 28.03 19.38 Z" fill="#20f020"/><path d="M16 15 L28.03 19.38 A12.8 12.8 0 0 1 27.09 21.40 Z" fill="#f0f020"/><path d="M16 15 L27.09 21.40 A12.8 12.8 0 0 1 25.51 23.56 Z" fill="#30f0f0"/><path d="M16 15 L25.51 23.56 A12.8 12.8 0 0 1 23.16 25.61 Z" fill="#008080"/><path d="M16 15 L23.16 25.61 A12.8 12.8 0 0 1 21.21 26.69 Z" fill="#2020ff"/><path d="M16 15 L21.21 26.69 A12.8 12.8 0 0 1 20.17 27.10 Z" fill="#d0d0d0"/><path d="M16 15 L20.17 27.10 A12.8 12.8 0 0 1 18.44 27.56 Z" fill="#20f020"/><path d="M16 15 L18.44 27.56 A12.8 12.8 0 0 1 15.55 27.79 Z" fill="#ffff00"/><path d="M16 15 L15.55 27.79 A12.8 12.8 0 0 1 11.21 26.87 Z" fill="#c4c4c4"/><path d="M16 15 L11.21 26.87 A12.8 12.8 0 0 1 4.70 21.01 Z" fill="#f8f8f8"/><path d="M16 15 L4.70 21.01 A12.8 12.8 0 0 1 3.21 15.45 Z" fill="#b4b4b4"/>
<circle cx="16" cy="15" r="12.8" fill="none" stroke="#000" stroke-width="1.3"/>
<circle cx="16" cy="15" r="3" fill="#c0c0c0" stroke="#000" stroke-width="1.2"/>
<rect x="14.5" y="13.5" width="3" height="3" fill="#e0e0e0"/>
</svg>
<div class="panel" style="left:677px;top:247px;width:114px;height:74px"></div>
<div class="t" style="left:719px;top:259px;font-size:14px;letter-spacing:-0.7px">Mode</div>
<div class="btn2" style="left:681px;top:279px;width:53px;height:27px"></div>
<div class="t mono" style="left:686px;top:288px;font-size:12px;letter-spacing:-1.2px;text-shadow:0.3px 0 0 #000">Refresh</div>
<div class="btn2" style="left:735px;top:279px;width:53px;height:27px"></div>
<div class="t mono" style="left:742px;top:288px;font-size:12px;letter-spacing:-1.2px;color:#909090;text-shadow:0.5px 0 0 #909090, 1px 1px 0 #f0f0f0">Export</div>
<div class="panel" style="left:677px;top:330px;width:114px;height:72px"></div>
<div class="t" style="left:721px;top:344px;font-size:14px;letter-spacing:-0.5px">Position</div>
<div class="btn2" style="left:681px;top:361px;width:53px;height:20px"></div>
<div class="t mono" style="left:683px;top:366px;font-size:12px;letter-spacing:-1.2px;text-shadow:0.3px 0 0 #000">Previous</div>
<div class="btn2" style="left:736px;top:361px;width:52px;height:20px"></div>
<div class="t mono" style="left:750px;top:366px;font-size:12px;letter-spacing:-1.2px;text-shadow:0.3px 0 0 #000">Next</div>
<div class="a" style="left:24px;top:432px;width:645px;height:56px;background:#000;border:1px solid #303030"></div>
<div class="a" style="left:28px;top:436px;width:637px;height:48px;border:1px solid #3a3a3a;background:linear-gradient(90deg,#707070 0,#202020 10px,#000 12px,#000 625px,#202020 627px,#707070 637px)"></div>
<div class="a" style="left:39px;top:440px;width:614px;height:41px;background:#000;border:1px solid #484848"></div>
<div class="t wt" style="left:47px;top:444px;font-size:14px">Length:</div>
<div class="t" style="left:118px;top:447px;font-size:11px;color:#fff;letter-spacing:0.85px">00:00:00</div>
<div class="t wt" style="left:195px;top:444px;font-size:14px">Position:</div>
<div class="t" style="left:271px;top:448px;font-size:11px;color:#fff;letter-spacing:0.85px">00:00:00</div>
<div class="t" style="left:330px;top:446px;font-size:14px;color:#ff1010;font-weight:bold">0%</div>
<div class="t wt" style="left:195px;top:462px;font-size:14px">Current Time:</div>
<div class="t wt" style="left:309px;top:462px;font-size:14px;letter-spacing:0.2px">09:51:33</div>
<div class="t" style="left:524px;top:441px;font-size:16px;color:#ffff00;letter-spacing:1.0px;text-shadow:0.4px 0 0 #ffff00">File not found</div>
<div class="t" style="left:524px;top:460px;font-size:16px;color:#ffff00;letter-spacing:0.75px;text-shadow:0.4px 0 0 #ffff00">File in Archive</div>
<div class="a" style="left:45px;top:501px;width:240px;height:25px;background:#000"></div>
<div class="a" style="left:47px;top:503px;width:46px;height:21px;background:#c0c0c0;border-top:2px solid #fff;border-left:2px solid #fff;border-right:2px solid #808080;border-bottom:2px solid #808080"></div>
<div class="a" style="left:94px;top:503px;width:46px;height:21px;background:#c0c0c0;border-top:2px solid #fff;border-left:2px solid #fff;border-right:2px solid #808080;border-bottom:2px solid #808080"></div>
<div class="a" style="left:141px;top:503px;width:46px;height:21px;background:#c0c0c0;border-top:2px solid #fff;border-left:2px solid #fff;border-right:2px solid #808080;border-bottom:2px solid #808080"></div>
<div class="a" style="left:188px;top:503px;width:46px;height:21px;background:#c0c0c0;border-top:2px solid #fff;border-left:2px solid #fff;border-right:2px solid #808080;border-bottom:2px solid #808080"></div>
<div class="a" style="left:235px;top:503px;width:48px;height:21px;background:#c0c0c0;border-top:2px solid #fff;border-left:2px solid #fff;border-right:2px solid #808080;border-bottom:2px solid #808080"></div>
<svg class="a" style="left:60px;top:505px" width="22" height="17" viewBox="0 0 22 17"><g transform="translate(1,1)" stroke="#fff" stroke-width="1" fill="none"><path d="M2.5 2V14"/><path d="M18.5 2V14L6 8Z"/></g><g stroke="#808080" stroke-width="1" fill="none"><path d="M2.5 2V14"/><path d="M18.5 2V14L6 8Z"/></g></svg>
<svg class="a" style="left:107px;top:505px" width="22" height="17" viewBox="0 0 22 17"><g transform="translate(1,1)" stroke="#fff" stroke-width="1" fill="none"><path d="M2.5 2V14L15 8Z"/><path d="M16.5 2V14"/></g><g stroke="#808080" stroke-width="1" fill="none"><path d="M2.5 2V14L15 8Z"/><path d="M16.5 2V14"/></g></svg>
<svg class="a" style="left:154px;top:505px" width="18" height="17" viewBox="0 0 18 17"><g transform="translate(1,1)" stroke="#fff" stroke-width="1" fill="none"><path d="M2.5 2V14L15 8Z"/></g><g stroke="#808080" stroke-width="1" fill="none"><path d="M2.5 2V14L15 8Z"/></g></svg>
<svg class="a" style="left:202px;top:505px" width="14" height="17" viewBox="0 0 14 17"><g transform="translate(1,1)" stroke="#fff" stroke-width="1" fill="none"><path d="M3.5 2V14M8.5 2V14"/></g><g stroke="#808080" stroke-width="1" fill="none"><path d="M3.5 2V14M8.5 2V14"/></g></svg>
<svg class="a" style="left:249px;top:506px" width="18" height="14" viewBox="0 0 18 14"><g transform="translate(1,1)" stroke="#fff" stroke-width="1" fill="none"><rect x="2.5" y="2.5" width="12" height="8"/></g><g stroke="#808080" stroke-width="1" fill="none"><rect x="2.5" y="2.5" width="12" height="8"/></g></svg>
<div class="a" style="left:291px;top:502px;width:369px;height:20px;background:#c4c4c4"></div>
<div class="a" style="left:298px;top:508px;width:356px;height:1px;background:#505050"></div>
<div class="a" style="left:298px;top:509px;width:356px;height:1px;background:#000"></div>
<div class="a" style="left:298px;top:510px;width:356px;height:2px;background:#fff"></div>
<div class="a" style="left:300px;top:519px;width:1px;height:3px;background:#000"></div>
<div class="a" style="left:335px;top:519px;width:1px;height:3px;background:#000"></div>
<div class="a" style="left:370px;top:519px;width:1px;height:3px;background:#000"></div>
<div class="a" style="left:405px;top:519px;width:1px;height:3px;background:#000"></div>
<div class="a" style="left:440px;top:519px;width:1px;height:3px;background:#000"></div>
<div class="a" style="left:475px;top:519px;width:1px;height:3px;background:#000"></div>
<div class="a" style="left:510px;top:519px;width:1px;height:3px;background:#000"></div>
<div class="a" style="left:545px;top:519px;width:1px;height:3px;background:#000"></div>
<div class="a" style="left:580px;top:519px;width:1px;height:3px;background:#000"></div>
<div class="a" style="left:615px;top:519px;width:1px;height:3px;background:#000"></div>
<div class="a" style="left:650px;top:519px;width:1px;height:3px;background:#000"></div>
<svg class="a" style="left:297px;top:504px" width="8" height="14" viewBox="0 0 8 14"><path d="M0.5 0.5H6.5V9.5L3.5 13L0.5 9.5Z" fill="#c0c0c0"/><path d="M0.5 10V0.5H6.5" stroke="#fff" fill="none"/><path d="M6.5 0.5V9.5L3.5 13" stroke="#000" fill="none"/></svg>
<div class="a" style="left:675px;top:433px;width:105px;height:71px;border:1px solid #808080;box-shadow:inset 1px 1px 0 #fff,1px 1px 0 #fff;background:linear-gradient(90deg,#d0d0d0 0,#d0d0d0 21px,#c8c8c8 22px,#c8c8c8 40px,#d4d4d4 41px,#d4d4d4 46px,#c8c8c8 47px)"></div>
<div class="a" style="left:698px;top:439px;width:80px;height:27px;background:#c4c4c4"></div>
<div class="t mono" style="left:709px;top:448px;font-size:12px;letter-spacing:-1.2px">Single</div>
<div class="btn2" style="left:678px;top:466px;width:32px;height:17px;border-right-width:2px;border-bottom-width:2px;border-right-color:#000;border-bottom-color:#000"></div>
<div class="t mono" style="left:690px;top:469px;font-size:12px;color:#909090;text-shadow:1px 1px 0 #fff">S</div>
<div class="btn2" style="left:711px;top:466px;width:32px;height:17px;border-right-width:2px;border-bottom-width:2px;border-right-color:#000;border-bottom-color:#000"></div>
<div class="t mono" style="left:723px;top:469px;font-size:12px;color:#000;">A</div>
<div class="btn2" style="left:744px;top:466px;width:32px;height:17px;border-right-width:2px;border-bottom-width:2px;border-right-color:#000;border-bottom-color:#000"></div>
<div class="t mono" style="left:756px;top:469px;font-size:12px;color:#000;">R</div>
<div class="btn2" style="left:704px;top:522px;width:59px;height:27px"></div>
<div class="t mono" style="left:720px;top:531px;font-size:12px;letter-spacing:-1.2px;text-shadow:0.4px 0 0 #000">Exit</div>
</body></html>
